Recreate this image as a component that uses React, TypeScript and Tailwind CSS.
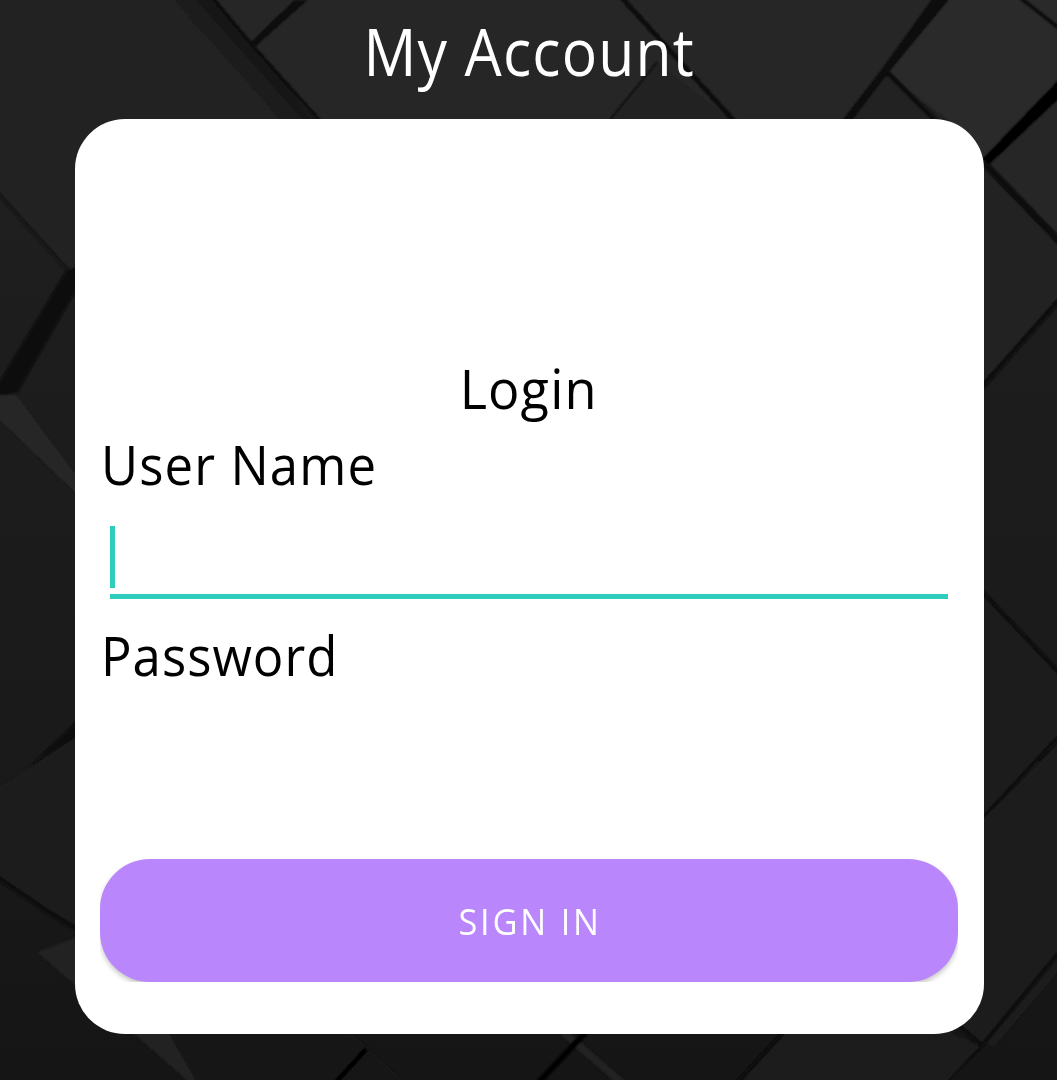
function Backdrop() {
  return (
    <svg className="absolute inset-0 h-full w-full" viewBox="0 0 1057 1080" preserveAspectRatio="none" aria-hidden="true">
      <defs>
        <linearGradient id="base" x1="0" y1="0" x2="0" y2="1">
          <stop offset="0" stopColor="#232323" />
          <stop offset="0.3" stopColor="#1d1d1d" />
          <stop offset="0.7" stopColor="#1a1a1a" />
          <stop offset="1" stopColor="#151515" />
        </linearGradient>
        <linearGradient id="edge" gradientUnits="userSpaceOnUse" x1="225" y1="87" x2="262" y2="54">
          <stop offset="0" stopColor="#222222" />
          <stop offset="0.5" stopColor="#1f1f1f" />
          <stop offset="1" stopColor="#131313" />
        </linearGradient>
        <filter id="soft" x="-5%" y="-5%" width="110%" height="110%">
          <feGaussianBlur stdDeviation="1.1" />
        </filter>
      </defs>
      <rect width="1057" height="1080" fill="url(#base)" />
      <g filter="url(#soft)">
        {/* top tiles */}
        <path d="M-5-5H213L320 130H90V290L70 270L-5 190Z" fill="#222222" />
        <path d="M100-5H212L322 130H100Z" fill="url(#edge)" />
        <path d="M212-5H300L253 45Z" fill="#272727" />
        <path d="M308-5H624L735 125H322L254 48Z" fill="#272727" />
        <path d="M657 62L605 125H738Z" fill="#202020" />
        <path d="M624-5H935L845 125H738Z" fill="#252525" />
        <path d="M945-5H1062V85L984 162L975 140L885 73Z" fill="#292929" />
        <path d="M887 74L846 125H937Z" fill="#232323" />
        <path d="M294 0H308L255 47L250 43Z" fill="#0b0b0b" />
        <path d="M212-3L253 46L322 123" stroke="#111111" strokeWidth="4" fill="none" />
        <path d="M620-4L736 123" stroke="#080808" strokeWidth="5" />
        <path d="M657 62L607 123" stroke="#101010" strokeWidth="2" />
        <path d="M934-4H952L889 72L850 123H840L881 70Z" fill="#070707" />
        <path d="M888 73L938 123" stroke="#080808" strokeWidth="5" />
        <path d="M1018-4L1060 29" stroke="#0a0a0a" strokeWidth="4" />
        {/* right tiles */}
        <path d="M980 166L1060 241V300L980 387Z" fill="#242424" />
        <path d="M990 163L1060 96V236Z" fill="#272727" />
        <path d="M1060 78V98L988 166L981 160Z" fill="#060606" />
        <path d="M982 161L1060 242" stroke="#070707" strokeWidth="7" />
        <path d="M1060 299L980 389" stroke="#090909" strokeWidth="5" />
        <path d="M980 593L1060 672V738L980 819Z" fill="#1d1d1d" />
        <path d="M980 590L1060 674" stroke="#080808" strokeWidth="4" />
        <path d="M1060 735L980 821" stroke="#080808" strokeWidth="4" />
        <path d="M980 822L1060 742V955L984 1043L940 1020Z" fill="#1d1d1d" />
        <path d="M1060 963L990 1045" stroke="#1e1e1e" strokeWidth="8" />
        <path d="M1060 951L984 1043L942 1083" stroke="#080808" strokeWidth="4" fill="none" />
        <path d="M955 1022L982 1045" stroke="#0b0b0b" strokeWidth="4" />
        {/* left tiles */}
        <path d="M-3 192L68 270" stroke="#151515" strokeWidth="4" />
        <path d="M66 271L78 266V287L17 393L-3 396V386L38 318Z" fill="#080808" />
        <path d="M-3 395L16 395L78 478V495L-3 417Z" fill="#262626" />
        <path d="M-3 788L38 763L78 735V902L75 932L-3 877Z" fill="#1c1c1c" />
        <path d="M78 720V736L30 766Z" fill="#080808" />
        <path d="M-3 877L50 913L78 930" stroke="#101010" strokeWidth="5" fill="none" />
        <path d="M37 952L80 936V989Z" fill="#242424" />
        {/* bottom tiles */}
        <path d="M132 1032H350L405 1083H190Z" fill="#191919" />
        <path d="M132 1032H168L197 1083H190Z" fill="#212121" />
        <path d="M365 1050L335 1083H402Z" fill="#121212" />
        <path d="M366 1049L335 1083" stroke="#060606" strokeWidth="5" />
        <path d="M563 1032L622 1083" stroke="#202020" strokeWidth="8" />
        <path d="M586 1032L538 1083" stroke="#060606" strokeWidth="6" />
        <path d="M784 1032H950L980 1046L945 1083H740Z" fill="#1a1a1a" />
        <path d="M784 1032L737 1083" stroke="#080808" strokeWidth="4" />
      </g>
    </svg>
  );
}

export default function App() {
  return (
    <div className="relative h-[1080px] w-full overflow-hidden bg-[#1b1b1b] font-['Open_Sans','Noto_Sans',sans-serif]">
      <Backdrop />
      <main className="relative flex h-full flex-col items-center pl-px">
        <h1 className="flex h-[119px] w-full shrink-0 items-start justify-center pt-[6px] text-[65px] leading-[90px] whitespace-nowrap text-white">
          <span className="inline-block scale-x-[0.905] tracking-[1.3px]">My Account</span>
        </h1>
        <form
          className="flex h-[915px] w-[909px] flex-col rounded-[50px] bg-white px-[25px] pt-[231px] text-[55px] leading-[76px] text-black"
          onSubmit={(e) => e.preventDefault()}
        >
          <h2 className="text-center whitespace-nowrap">
            <span className="inline-block scale-x-[0.95] tracking-[1.2px]">Login</span>
          </h2>
          <label htmlFor="user" className="pl-px whitespace-nowrap">
            <span className="inline-block origin-left scale-x-[0.925] tracking-[1.2px]">User Name</span>
          </label>
          <div id="user" className="mr-[11px] ml-[10px] flex h-[97px] flex-col justify-end gap-[6px]">
            <span className="h-[62px] w-[5px] bg-[#2fcdbd]" />
            <span className="h-[5px] w-full bg-[#2fcdbd]" />
          </div>
          <span className="mt-[18px] pl-px whitespace-nowrap">
            <span className="inline-block origin-left scale-x-[0.925] tracking-[1.1px]">Password</span>
          </span>
          <div className="mt-auto mr-px mb-[52px] overflow-hidden">
            <button className="block h-[123px] w-full rounded-[50px] bg-[#ba86fc] pl-[4px] text-[37px] leading-[50px] tracking-[3px] whitespace-nowrap text-white shadow-[0_3px_5px_rgba(0,0,0,0.22)]">
              <span className="inline-block scale-x-[0.93]">SIGN IN</span>
            </button>
          </div>
        </form>
      </main>
    </div>
  );
}
